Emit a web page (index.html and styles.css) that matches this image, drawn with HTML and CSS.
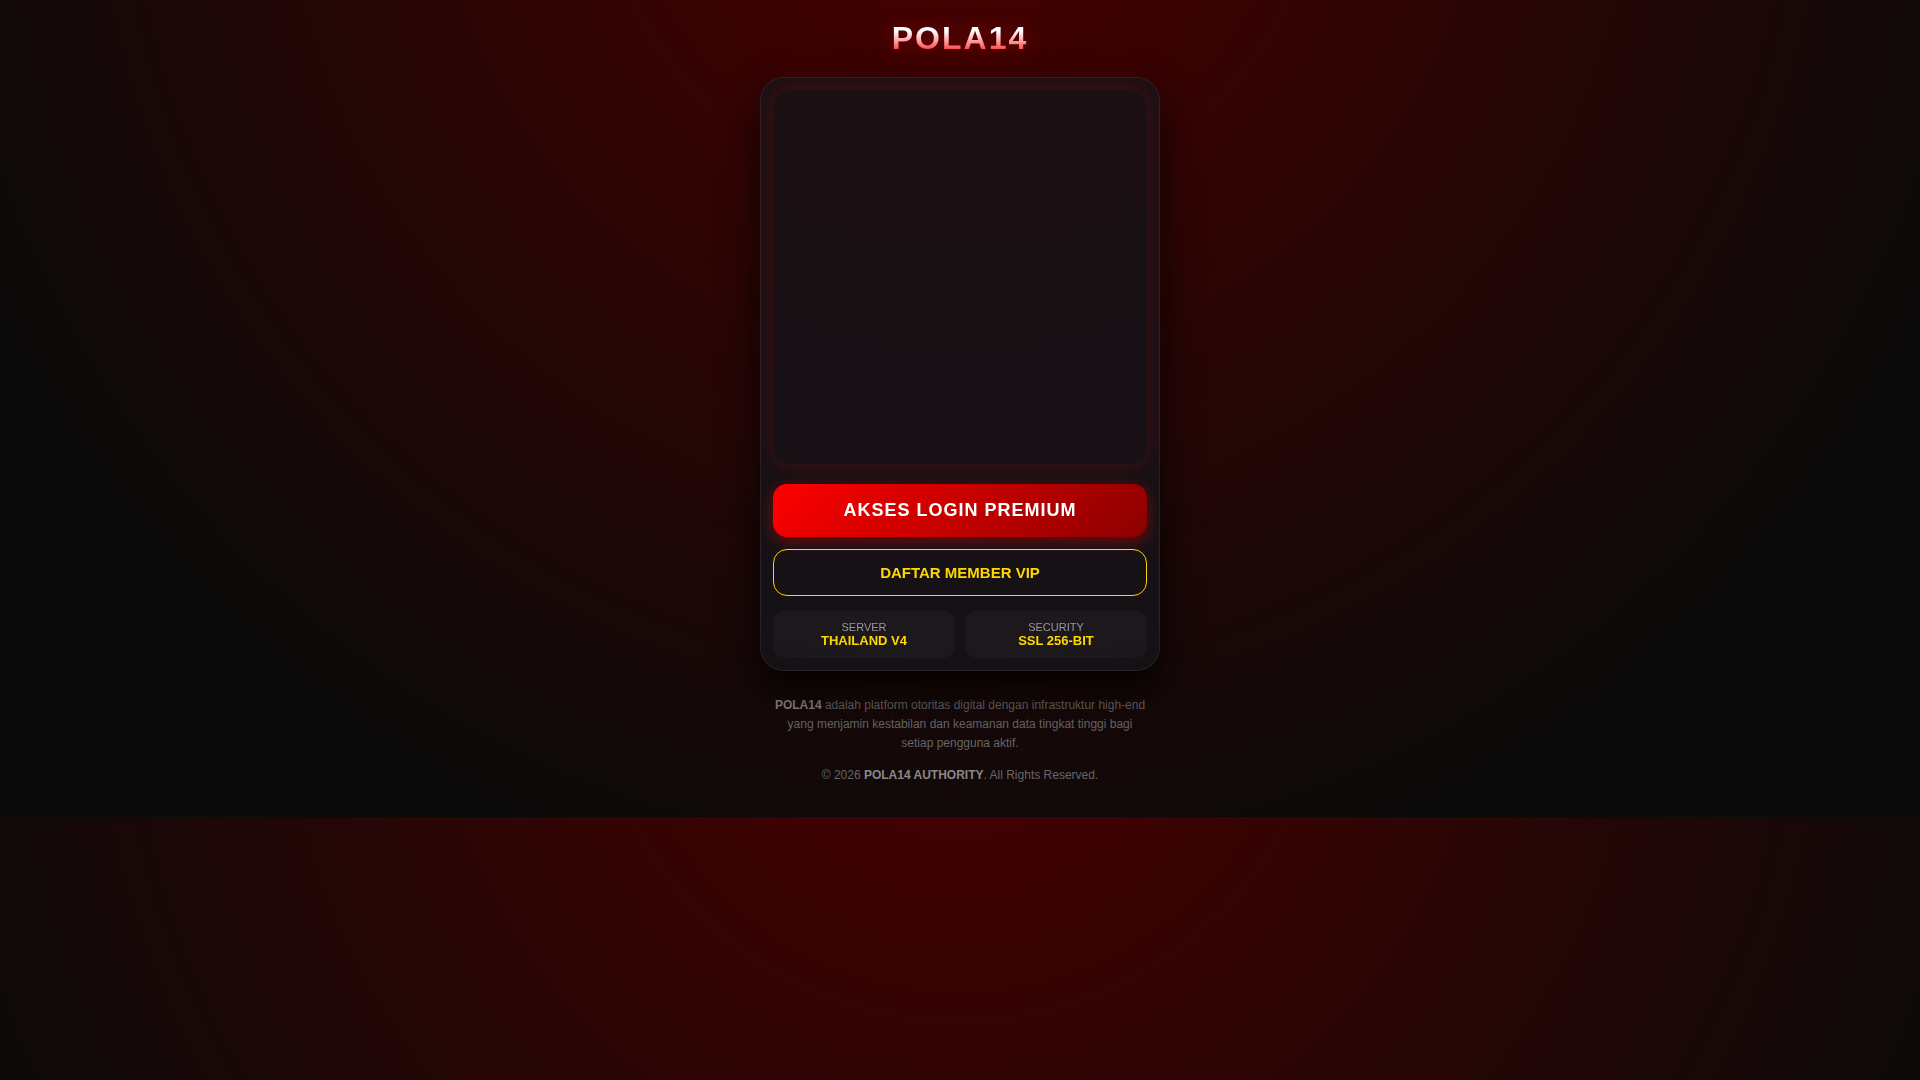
FILE: index.html
```
<!DOCTYPE html>
<html lang="id">
<head>
  <meta charset="utf-8">
  <meta name="viewport" content="width=device-width, initial-scale=1.0">
  <title>POLA14</title>
  <link rel="stylesheet" href="styles.css">
</head>
<body>
  <header class="header">
    <h1 class="logo">POLA14</h1>
  </header>

  <main class="card">
    <div class="banner"></div>

    <div class="actions">
      <a href="#" class="btn btn-login">Akses Login Premium</a>
      <a href="#" class="btn btn-register">Daftar Member VIP</a>
    </div>

    <div class="info-grid">
      <div class="info-item">Server<b>THAILAND V4</b></div>
      <div class="info-item">Security<b>SSL 256-BIT</b></div>
    </div>
  </main>

  <footer class="footer">
    <p><strong>POLA14</strong> adalah platform otoritas digital dengan infrastruktur high-end yang menjamin kestabilan dan keamanan data tingkat tinggi bagi setiap pengguna aktif.</p>
    <p>© 2026 <strong>POLA14 AUTHORITY</strong>. All Rights Reserved.</p>
  </footer>
</body>
</html>
```

FILE: styles.css
```
:root {
  --primary: #ff0000;
  --primary-dark: #8b0000;
  --gold: #ffd700;
  --bg: #0a0a0a;
  --card-bg: rgba(20, 20, 25, 0.8);
}

* {
  margin: 0;
  padding: 0;
  box-sizing: border-box;
}

body {
  font-family: "Liberation Sans", Arial, sans-serif;
  background: radial-gradient(circle at 50% -20%, #4a0000 0%, var(--bg) 80%);
  color: #fff;
  display: flex;
  flex-direction: column;
  align-items: center;
}

.header {
  padding: 20px 0;
  text-align: center;
}

.logo {
  font-size: 32px;
  line-height: 37px;
  letter-spacing: 2px;
  text-transform: uppercase;
  background: linear-gradient(to bottom, #fff 30%, var(--primary) 100%);
  -webkit-background-clip: text;
  background-clip: text;
  -webkit-text-fill-color: transparent;
  filter: drop-shadow(0 0 10px rgba(255, 0, 0, 0.4));
}

.card {
  width: 100%;
  max-width: 400px;
  padding: 12px;
  background: var(--card-bg);
  backdrop-filter: blur(15px);
  border: 1px solid rgba(255, 255, 255, 0.08);
  border-radius: 24px;
  box-shadow: 0 20px 40px rgba(0, 0, 0, 0.8);
}

.banner {
  aspect-ratio: 1;
  margin-bottom: 20px;
  border-radius: 18px;
  box-shadow: 0 0 20px rgba(255, 0, 0, 0.2);
}

.actions {
  display: flex;
  flex-direction: column;
  gap: 12px;
}

.btn {
  border-radius: 14px;
  font-weight: bold;
  text-align: center;
  text-decoration: none;
  text-transform: uppercase;
}

.btn-login {
  padding: 16px;
  font-size: 18px;
  letter-spacing: 1px;
  color: #fff;
  background: linear-gradient(135deg, var(--primary), var(--primary-dark));
  box-shadow: 0 4px 15px rgba(255, 0, 0, 0.4);
}

.btn-register {
  padding: 14px;
  font-size: 15px;
  color: var(--gold);
  border: 1px solid var(--gold);
}

.info-grid {
  display: grid;
  grid-template-columns: 1fr 1fr;
  gap: 10px;
  margin-top: 15px;
}

.info-item {
  padding: 10px;
  font-size: 11px;
  text-align: center;
  text-transform: uppercase;
  color: #999;
  background: rgba(255, 255, 255, 0.03);
  border-radius: 12px;
}

.info-item b {
  display: block;
  font-size: 13px;
  color: var(--gold);
}

.footer {
  max-width: 400px;
  padding: 25px 10px 32px;
  font-size: 12px;
  line-height: 19px;
  text-align: center;
  color: #666;
}

.footer p + p {
  margin-top: 13px;
}

.footer strong {
  color: #888;
}
```
